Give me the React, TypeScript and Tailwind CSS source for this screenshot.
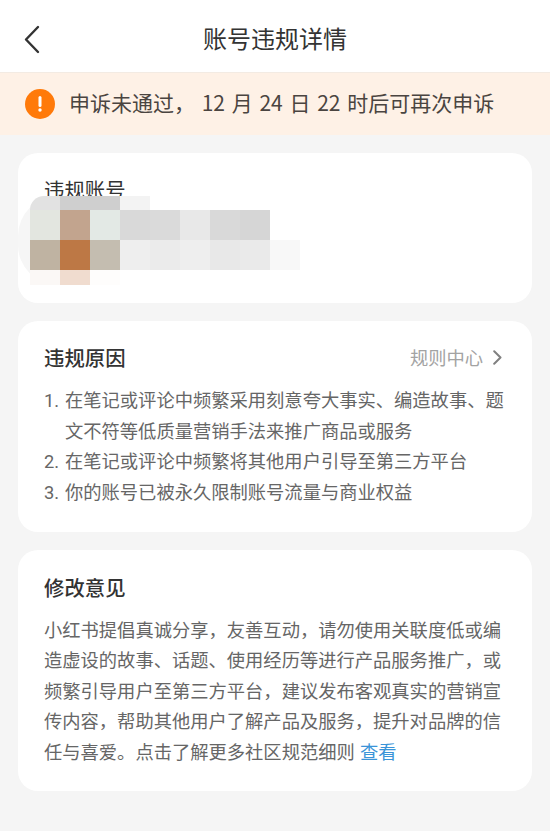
const mosaic = [
  ['#e2e2e2', '#cfcfcf', '#cfcfcf', '#f3f3f3', '#ffffff', '#ffffff', '#ffffff', '#ffffff', '#ffffff'],
  ['#e3e6e0', '#c2a48e', '#e3e9e5', '#d9d9d9', '#dadada', '#e8e8e8', '#d9d9d9', '#d6d6d6', '#ffffff'],
  ['#bfb3a2', '#bd7845', '#c4bdb0', '#eeeeee', '#ebebeb', '#eeeeee', '#e8e8e8', '#eaeaea', '#f8f8f8'],
  ['#fbf8f6', '#f0dccf', '#fefdfc', '#ffffff', '#ffffff', '#ffffff', '#ffffff', '#ffffff', '#ffffff'],
]

const reasons = [
  '在笔记或评论中频繁采用刻意夸大事实、编造故事、题文不符等低质量营销手法来推广商品或服务',
  '在笔记或评论中频繁将其他用户引导至第三方平台',
  '你的账号已被永久限制账号流量与商业权益',
]

export default function App() {
  return (
    <div className="h-[831px] w-[550px] overflow-hidden bg-[#f5f5f5] font-['Noto_Sans_CJK_SC','Noto_Sans',sans-serif]">
      {/* Header */}
      <div className="relative flex h-[73px] items-center justify-center border-b border-[#f3ebe3] bg-white pt-[3px]">
        <svg className="absolute left-[23px] top-[25px] h-[30px] w-[18px]" viewBox="0 0 18 30" fill="none">
          <path d="M15 2 L3 14.5 L15 27" stroke="#333333" strokeWidth="2.4" strokeLinecap="round" strokeLinejoin="round" />
        </svg>
        <h1 className="text-[24px] font-normal leading-none text-[#333333]">账号违规详情</h1>
      </div>

      {/* Banner */}
      <div className="flex h-[62px] items-center gap-[14px] bg-[#fef1e6] pl-[25px]">
        <div className="flex h-[30px] w-[30px] items-center justify-center rounded-full bg-[#ff7a0a]">
          <svg className="h-[16px] w-[4px]" viewBox="0 0 4 16" fill="none">
            <path d="M2 1.5 V9.5" stroke="#ffffff" strokeWidth="3" strokeLinecap="round" />
            <circle cx="2" cy="14" r="1.7" fill="#ffffff" />
          </svg>
        </div>
        <p className="pb-[3px] text-[21px] leading-none text-[#4a4440] [word-spacing:2px]">申诉未通过， 12 月 24 日 22 时后可再次申诉</p>
      </div>

      <div className="flex flex-col gap-[18px] px-[18px] pt-[18px]">
        {/* Account card */}
        <section className="relative h-[150px] overflow-hidden rounded-[20px] bg-white px-[26px] pt-[26px]">
          <h2 className="text-[20.4px] leading-none text-[#333333]">违规账号</h2>
          <div className="absolute left-0 top-[43px] h-[89px] w-[40px] rounded-l-[40px] bg-[#f6f6f6]" />
          <div className="absolute left-[12px] top-[43px] grid grid-cols-[repeat(9,30px)] grid-rows-[14px_30px_30px_15px]">
            {mosaic.flat().map((color, i) => (
              <div key={i} className={i === 0 ? 'rounded-tl-[28px]' : ''} style={{ backgroundColor: color }} />
            ))}
          </div>
        </section>

        {/* Reasons card */}
        <section className="h-[211px] rounded-[20px] bg-white px-[26px] pt-[22px]">
          <div className="flex items-center justify-between">
            <h2 className="text-[20.4px] font-medium leading-[28px] text-[#333333]">违规原因</h2>
            <div className="flex items-center gap-[10px] pr-[4px] text-[18.3px] leading-[28px] text-[#a3a3a3]">
              规则中心
              <svg className="h-[15px] w-[9px]" viewBox="0 0 9 15" fill="none">
                <path d="M1.2 1.2 L7.5 7.5 L1.2 13.8" stroke="#808080" strokeWidth="2" strokeLinecap="round" strokeLinejoin="round" />
              </svg>
            </div>
          </div>
          <ol className="mt-[13px] flex flex-col text-[18.3px] leading-[30.6px] text-[#666666]">
            {reasons.map((text, i) => (
              <li key={i} className="flex items-baseline">
                <span className="w-[21px] shrink-0 font-['Roboto'] leading-none">{i + 1}.</span>
                <span>{text}</span>
              </li>
            ))}
          </ol>
        </section>

        {/* Advice card */}
        <section className="h-[241px] rounded-[20px] bg-white px-[26px] pt-[23px]">
          <h2 className="text-[20.4px] font-medium leading-[28px] text-[#333333]">修改意见</h2>
          <p className="mt-[13px] text-[18.3px] leading-[30.4px] text-[#666666] [word-spacing:1px]">
            小红书提倡真诚分享，友善互动，请勿使用关联度低或编造虚设的故事、话题、使用经历等进行产品服务推广，或频繁引导用户至第三方平台，建议发布客观真实的营销宣传内容，帮助其他用户了解产品及服务，提升对品牌的信任与喜爱。点击了解更多社区规范细则 <span className="text-[#3a94d8]">查看</span>
          </p>
        </section>
      </div>
    </div>
  )
}
